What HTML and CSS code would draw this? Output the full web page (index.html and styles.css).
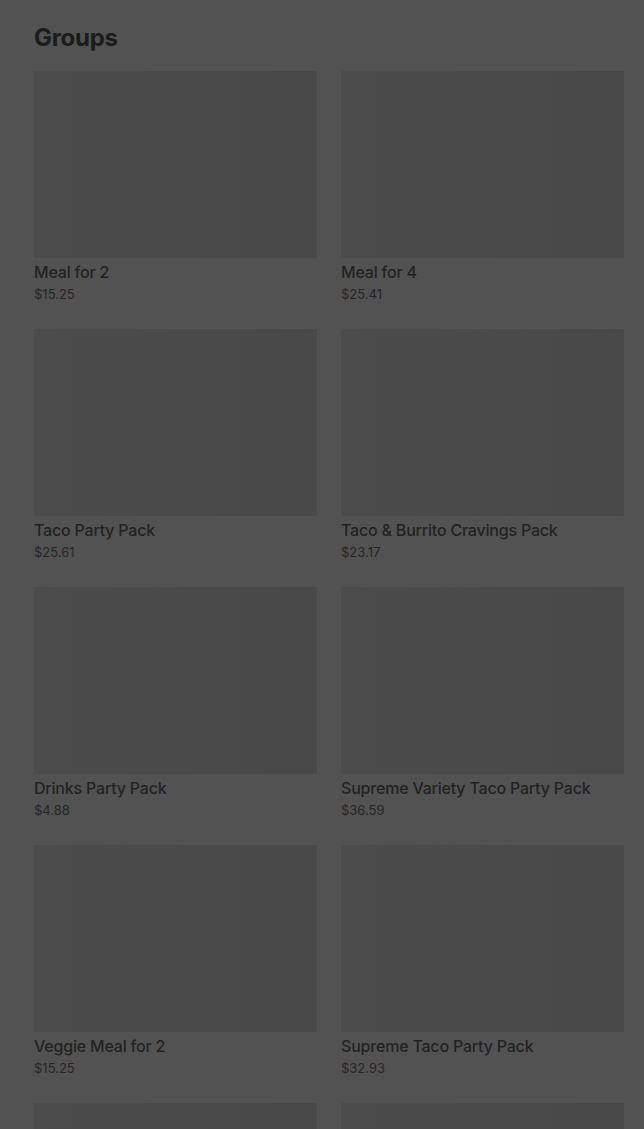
FILE: index.html
```html
<!DOCTYPE html>
<html>
<head>
<meta charset="utf-8">
<link rel="stylesheet" href="styles.css">
</head>
<body>
<main class="page">
  <h2 class="section-title">Groups</h2>
  <div class="grid">
    <div class="card"><div class="thumb"></div><div class="name">Meal for 2</div><div class="price">$15.25</div></div>
    <div class="card"><div class="thumb"></div><div class="name">Meal for 4</div><div class="price">$25.41</div></div>
    <div class="card"><div class="thumb"></div><div class="name">Taco Party Pack</div><div class="price">$25.61</div></div>
    <div class="card"><div class="thumb"></div><div class="name">Taco &amp; Burrito Cravings Pack</div><div class="price">$23.17</div></div>
    <div class="card"><div class="thumb"></div><div class="name">Drinks Party Pack</div><div class="price">$4.88</div></div>
    <div class="card"><div class="thumb"></div><div class="name">Supreme Variety Taco Party Pack</div><div class="price">$36.59</div></div>
    <div class="card"><div class="thumb"></div><div class="name">Veggie Meal for 2</div><div class="price">$15.25</div></div>
    <div class="card"><div class="thumb"></div><div class="name">Supreme Taco Party Pack</div><div class="price">$32.93</div></div>
    <div class="card"><div class="thumb"></div></div>
    <div class="card"><div class="thumb"></div></div>
  </div>
</main>
</body>
</html>
```

FILE: styles.css
```css
html, body {
  margin: 0;
  padding: 0;
  background: #525252;
  overflow: hidden;
}
.page {
  padding: 0 20px 0 34px;
  font-family: Inter, "Liberation Sans", sans-serif;
  color: #1e1e1e;
}
.section-title {
  margin: 0;
  padding-top: 22px;
  height: 71px;
  box-sizing: border-box;
  font-size: 24px;
  line-height: 32px;
  font-weight: 700;
  letter-spacing: -0.3px;
  color: #1c1c1c;
}
.grid {
  display: grid;
  grid-template-columns: 283px 283px;
  column-gap: 24px;
  row-gap: 24px;
}
.thumb {
  height: 187px;
  background: linear-gradient(90deg, #4c4c4c 0%, #4a4a4a 50%, #494949 100%);
}
.name {
  margin-top: 2px;
  font-size: 16px;
  line-height: 24px;
  font-weight: 500;
  letter-spacing: -0.2px;
  color: #222;
}
.price {
  font-size: 13px;
  line-height: 21px;
  color: #262626;
}
```
